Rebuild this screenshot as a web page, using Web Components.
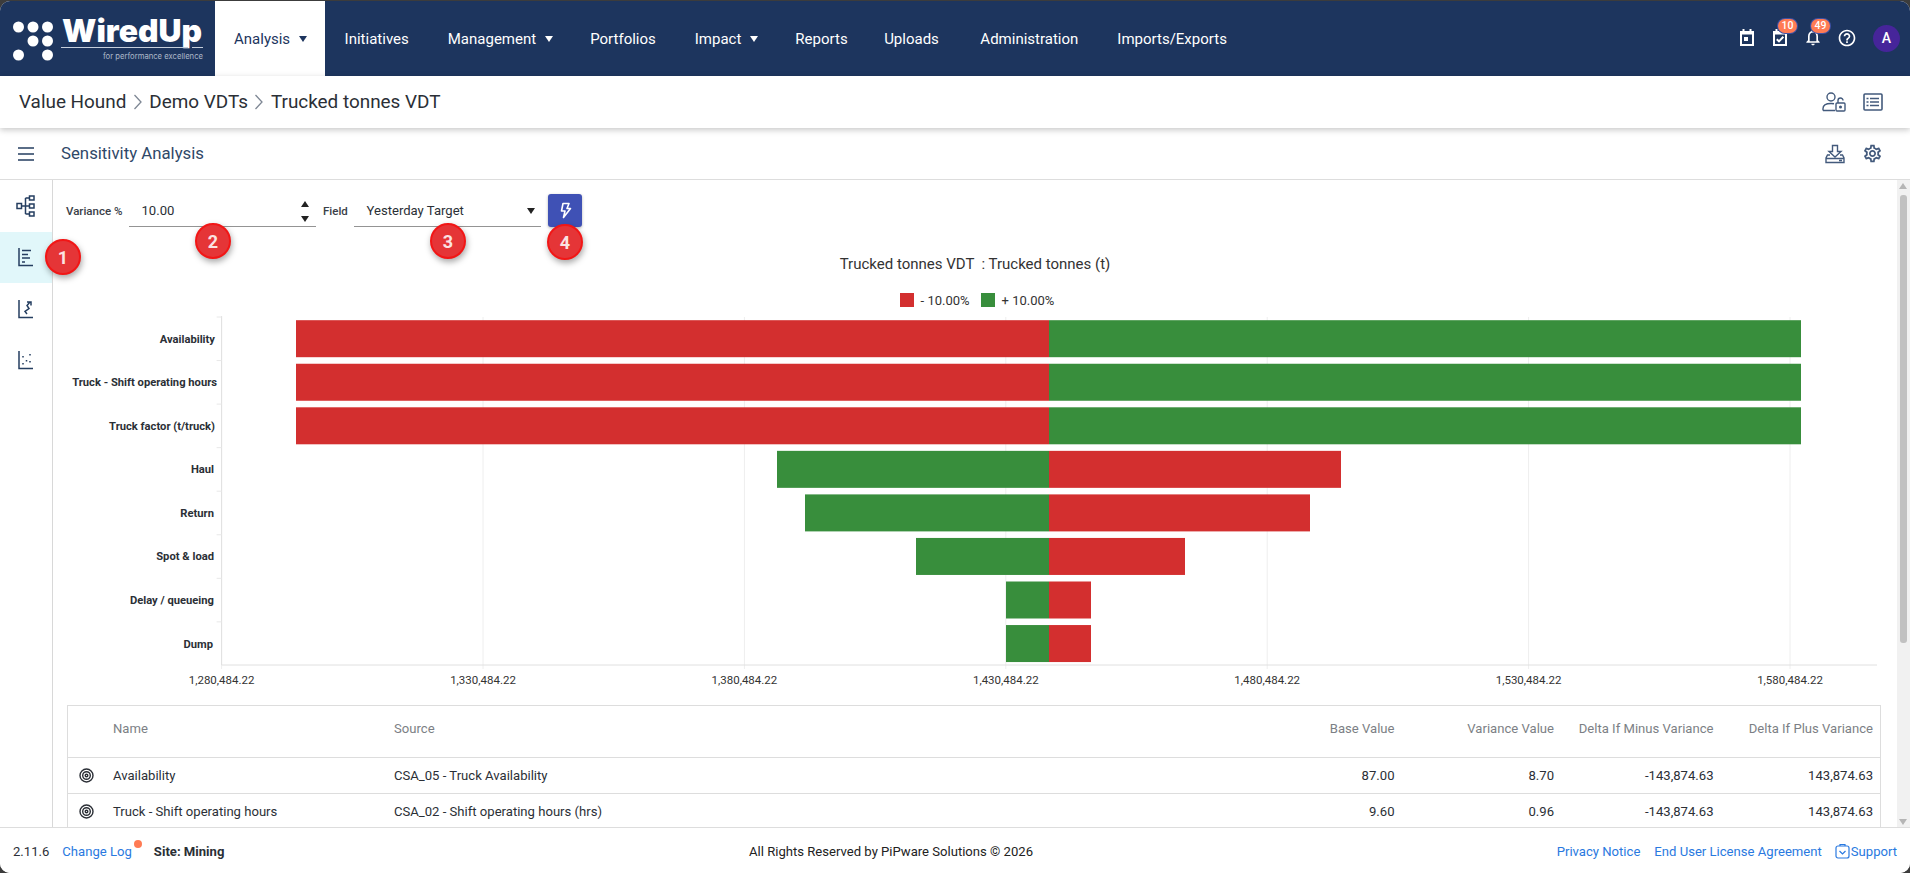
<!DOCTYPE html>
<html lang="en"><head><meta charset="utf-8"><title>Sensitivity Analysis</title>
<style>
html,body{margin:0;height:873px;overflow:hidden;background:#3c3c3c}
body{font-family:Roboto,"Liberation Sans",sans-serif}
app-shell{display:flex}
</style></head><body>
<app-shell>
  <wu-header></wu-header>
  <wu-crumb></wu-crumb>
  <wu-titlebar></wu-titlebar>
  <div slot="body">
    <wu-sidebar></wu-sidebar>
    <wu-main>
      <wu-toolbar></wu-toolbar>
      <wu-chart></wu-chart>
      <wu-table></wu-table>
    </wu-main>
  </div>
  <wu-footer></wu-footer>
</app-shell>
<script>
function def(name,css,html,init){
  customElements.define(name,class extends HTMLElement{
    constructor(){super();const s=this.attachShadow({mode:'open'});
      s.innerHTML='<style>'+css+'</style>'+(typeof html==='function'?html(this):html);
      if(init)init(s,this);}
  });
}
const GEAR="M19.43 12.98c.04-.32.07-.64.07-.98 0-.34-.03-.66-.07-.98l2.11-1.65c.19-.15.24-.42.12-.64l-2-3.46c-.09-.16-.26-.25-.44-.25-.06 0-.12.01-.17.03l-2.49 1c-.52-.4-1.08-.73-1.69-.98l-.38-2.65C14.46 2.18 14.25 2 14 2h-4c-.25 0-.46.18-.49.42l-.38 2.65c-.61.25-1.17.59-1.69.98l-2.49-1c-.06-.02-.12-.03-.18-.03-.17 0-.34.09-.43.25l-2 3.46c-.13.22-.07.49.12.64l2.11 1.65c-.04.32-.07.65-.07.98 0 .33.03.66.07.98l-2.11 1.65c-.19.15-.24.42-.12.64l2 3.46c.09.16.26.25.44.25.06 0 .12-.01.17-.03l2.49-1c.52.4 1.08.73 1.69.98l.38 2.65c.03.24.24.42.49.42h4c.25 0 .46-.18.49-.42l.38-2.65c.61-.25 1.17-.59 1.69-.98l2.49 1c.06.02.12.03.18.03.17 0 .34-.09.43-.25l2-3.46c.12-.22.07-.49-.12-.64l-2.11-1.65zm-1.98-1.71c.04.31.05.52.05.73 0 .21-.02.43-.05.73l-.14 1.13.89.7 1.08.84-.7 1.21-1.27-.51-1.04-.42-.9.68c-.43.32-.84.56-1.25.73l-1.06.43-.16 1.13-.2 1.35h-1.4l-.19-1.35-.16-1.13-1.06-.43c-.43-.18-.83-.41-1.23-.71l-.91-.7-1.06.43-1.27.51-.7-1.21 1.08-.84.89-.7-.14-1.13c-.03-.31-.05-.54-.05-.74s.02-.43.05-.73l.14-1.13-.89-.7-1.08-.84.7-1.21 1.27.51 1.04.42.9-.68c.43-.32.84-.56 1.25-.73l1.06-.43.16-1.13.2-1.35h1.39l.19 1.35.16 1.13 1.06.43c.43.18.83.41 1.23.71l.91.7 1.06-.43 1.27-.51.7 1.21-1.07.85-.89.7.14 1.13zM12 8c-2.21 0-4 1.79-4 4s1.79 4 4 4 4-1.79 4-4-1.79-4-4-4zm0 6c-1.1 0-2-.9-2-2s.9-2 2-2 2 .9 2 2-.9 2-2 2z";
const BELL="M12 22c1.1 0 2-.9 2-2h-4c0 1.1.9 2 2 2zm6-6v-5c0-3.07-1.63-5.64-4.5-6.32V4c0-.83-.67-1.5-1.5-1.5s-1.5.67-1.5 1.5v.68C7.64 5.36 6 7.92 6 11v5l-2 2v1h16v-1l-2-2zm-2 1H8v-6c0-2.48 1.51-4.5 4-4.5s4 2.02 4 4.5v6z";
const HELP="M11 18h2v-2h-2v2zm1-16C6.48 2 2 6.48 2 12s4.48 10 10 10 10-4.48 10-10S17.52 2 12 2zm0 18c-4.41 0-8-3.59-8-8s3.59-8 8-8 8 3.59 8 8-3.59 8-8 8zm0-14c-2.21 0-4 1.79-4 4h2c0-1.1.9-2 2-2s2 .9 2 2c0 2-3 1.75-3 5h2c0-2.25 3-2.5 3-5 0-2.21-1.79-4-4-4z";

def('app-shell',`:host{display:flex;flex-direction:column;height:872px;margin-top:1px;background:#fff;border-radius:10px;overflow:hidden;position:relative}
::slotted(div){display:flex;flex:1;min-height:0}`,`<slot></slot>`,(s,h)=>{h.querySelector('[slot=body]').removeAttribute('slot');});

def('wu-step',`:host{position:absolute;z-index:5;width:36px;height:36px;box-sizing:border-box;border-radius:50%;background:#e53537;border:2px solid #f21616;box-shadow:1px 3px 6px rgba(0,0,0,.35);color:#fbe3e3;font:700 18px Roboto,sans-serif;display:flex;align-items:center;justify-content:center}`,`<slot></slot>`);

def('wu-header',`:host{display:flex;flex:none;height:75px;background:#1d355e;color:#fff;font:400 15px Roboto,sans-serif}
.logo{flex:none;width:215px;height:75px;display:block}
nav{display:flex}
.i{display:flex;align-items:center;padding:0 19.5px;white-space:nowrap}
.i.k{padding-right:17.5px}
.i.u{margin-left:-2.5px;margin-right:2.5px}
.i.a{background:#fff;color:#1d355e;padding-left:19px;padding-right:18px}
.c{width:0;height:0;border:4px solid transparent;border-top:6px solid currentColor;border-bottom:0;margin-left:9px;}
.r{margin-left:auto;position:relative;width:210px;box-sizing:border-box}
.r svg{display:block;flex:none}
.b{position:absolute;top:18px;width:19px;height:14px;border-radius:7px;background:#ff7b54;box-shadow:0 0 0 1px #3f51a5;color:#fff;font:500 10.5px/14px Roboto,sans-serif;text-align:center}
.av{position:absolute;left:173px;top:24px;width:27px;height:27px;border-radius:50%;background:#46259a;font:500 14px/27px Roboto,sans-serif;text-align:center}
.ic{position:absolute;top:28px}
`,`<svg class="logo" viewBox="0 1 215 75">
<g fill="#fff"><circle cx="18.5" cy="27" r="5.5"/><circle cx="33" cy="27" r="5.5"/><circle cx="47.5" cy="27" r="5.5"/><circle cx="33" cy="41" r="5.5"/><circle cx="47.5" cy="41" r="5.5"/><circle cx="18.5" cy="55" r="5.5"/><circle cx="47.5" cy="55" r="5.5"/></g>
<text x="62" y="42" font-family="Inter,sans-serif" font-weight="900" font-size="31" fill="#fff" textLength="140" lengthAdjust="spacingAndGlyphs">WiredUp</text>
<path d="M61 47.5H188M192 47.5H203" stroke="#c6cfdc" stroke-width="1"/>
<text x="103" y="58.5" font-family="Inter,sans-serif" font-size="8" fill="#aeb9ca" textLength="100" lengthAdjust="spacingAndGlyphs">for performance excellence</text></svg>
<nav><div class="i a">Analysis<span class="c"></span></div><div class="i">Initiatives</div><div class="i k">Management<span class="c"></span></div><div class="i">Portfolios</div><div class="i k">Impact<span class="c"></span></div><div class="i">Reports</div><div class="i u">Uploads</div><div class="i">Administration</div><div class="i">Imports/Exports</div></nav>
<div class="r">
<svg class="ic" style="left:39px" width="16" height="17" viewBox="0 0 16 17" fill="none" stroke="#fff" stroke-width="2"><rect x="2" y="3" width="12" height="13"/><path d="M4.5 0V3M11.5 0V3M2 4.5H14"/><rect x="5" y="8" width="4" height="4" fill="#fff" stroke="none"/></svg>
<svg class="ic" style="left:72px" width="16" height="17" viewBox="0 0 16 17" fill="none" stroke="#fff" stroke-width="2"><rect x="2" y="3" width="12" height="13"/><path d="M4.5 0V3M11.5 0V3M2 4.5H14"/><path d="M4.8 10.2L7 12.4L11.4 7.8"/></svg>
<span class="b" style="left:78px">10</span>
<svg class="ic" style="left:103px;top:26px" width="20" height="20" viewBox="0 0 24 24" fill="#fff"><path d="${BELL}"/></svg>
<span class="b" style="left:111px">49</span>
<svg class="ic" style="left:137px;top:27px" width="20" height="20" viewBox="0 0 24 24" fill="#fff"><path d="${HELP}"/></svg>
<span class="av">A</span>
</div>`);

def('wu-crumb',`:host{display:flex;flex:none;align-items:center;height:52px;background:#fff;box-shadow:0 2px 6px rgba(0,0,0,.22);position:relative;z-index:2;padding:0 0 1px 19px;font:400 18.9px Roboto,sans-serif;color:#2b2f36;box-sizing:border-box}
svg.ch{margin:0 6.5px;flex:none}
.r{margin-left:auto;display:flex;gap:17px;padding-right:27px;align-items:center;padding-top:1px}`,`
Value Hound<svg class="ch" width="10" height="18" viewBox="0 0 10 18" fill="none" stroke="#7e8794" stroke-width="1.3"><path d="M1.5 2L8 9L1.5 16"/></svg>Demo VDTs<svg class="ch" width="10" height="18" viewBox="0 0 10 18" fill="none" stroke="#7e8794" stroke-width="1.3"><path d="M1.5 2L8 9L1.5 16"/></svg>Trucked tonnes VDT
<div class="r">
<svg width="24" height="20" viewBox="0 0 24 20" fill="none" stroke="#435a7c" stroke-width="1.4"><circle cx="9" cy="5" r="4"/><path d="M1 18.5v-2c0-3 3-5 8-5 1 0 2 .1 3 .3M1 18.5H13"/><rect x="14" y="11" width="9" height="8" rx="1"/><path d="M16 11V8.5a2.5 2.5 0 0 1 5 0"/><circle cx="18.5" cy="15" r=".8" fill="#435a7c"/></svg>
<svg width="20" height="18" viewBox="0 0 20 18" fill="none" stroke="#435a7c" stroke-width="1.6"><rect x="1" y="1" width="18" height="16" rx="1"/><path d="M7 5.5H16M7 9H16M7 12.5H16M3.5 5.5H5.5M3.5 9H5.5M3.5 12.5H5.5"/></svg>
</div>`);

def('wu-titlebar',`:host{display:flex;flex:none;align-items:center;height:51px;background:#fff;border-bottom:1px solid #ddd;box-sizing:content-box;color:#2f4868;font:400 16.8px Roboto,sans-serif;padding-left:18px}
.t{margin-left:26px;position:relative;top:-1px}
.r{margin-left:auto;display:flex;gap:17px;padding-right:27px;align-items:center}`,`
<svg width="17" height="14" viewBox="0 0 17 14" stroke="#253e60" stroke-width="1.6"><path d="M0 1H16M0 7H16M0 13H16"/></svg><span class="t">Sensitivity Analysis</span>
<div class="r">
<svg width="20" height="20" viewBox="0 0 20 20" fill="none" stroke="#435a7c" stroke-width="1.4"><path d="M7.5 1.5H12.5V7.5H16L10 13L4 7.5H7.5Z"/><path d="M5 11H2.5L1 14V18.5H19V14L17.5 11H15M1 14.5H19M14 16.5H17"/></svg>
<svg width="21" height="21" viewBox="0 0 24 24" fill="#435a7c"><path d="${GEAR}"/></svg>
</div>`);

def('wu-sidebar',`:host{display:flex;flex:none;flex-direction:column;width:52px;border-right:1px solid #d8d8d8;position:relative;background:#fff}
.n{height:51.5px;display:flex;align-items:center;justify-content:center}
.n.a{background:#e1f7fa}
svg{display:block;fill:none;stroke:#253e60;stroke-width:1.5}
wu-step{left:45px;top:59px}`,`
<div class="n"><svg width="20" height="22" viewBox="0 0 20 22"><rect x="1" y="8.5" width="4.5" height="5"/><path d="M5.5 11H9.5M9.5 3V19M9.5 3H13M9.5 11H13M9.5 19H13"/><rect x="13.5" y="1" width="4.5" height="4"/><rect x="13.5" y="9" width="4.5" height="4"/><rect x="13.5" y="17" width="4.5" height="4"/></svg></div>
<div class="n a"><svg width="18" height="20" viewBox="0 0 18 20"><path d="M2 1V18.5H16M5 3.5H14M5 7.5H11M5 11H13M5 15H8"/></svg></div>
<div class="n"><svg width="18" height="20" viewBox="0 0 18 20"><path d="M2 1V18.5H16M13 3L10 6.5L12 9.5L8 12.5L10 15M10 3H14V6.5"/></svg></div>
<div class="n"><svg width="18" height="20" viewBox="0 0 18 20"><path d="M2 1V18.5H16"/><g stroke-dasharray="1.5 100" stroke-linecap="butt"><path d="M6 13v2M6 6v2M9.5 10v2M13 4v2M13 11v2"/></g></svg></div>
<wu-step>1</wu-step>`);

def('wu-main',`:host{display:block;flex:1;min-width:0;position:relative;overflow:hidden;background:#fff}
.sb{position:absolute;right:0;top:0;bottom:0;width:13px;background:#f1f1f1}
.th{position:absolute;left:3px;width:7px;top:15px;height:448px;background:#c1c1c1;border-radius:3px}
.u,.d{position:absolute;left:2px;width:0;height:0;border:4.5px solid transparent}
.u{top:3px;border-bottom:6px solid #b5b5b5;border-top:0}
.d{bottom:2px;border-top:6px solid #b5b5b5;border-bottom:0}`,`<slot></slot><div class="sb"><div class="th"></div><div class="u"></div><div class="d"></div></div>`);

def('wu-toolbar',`:host{display:flex;align-items:flex-start;position:relative;height:70px;box-sizing:border-box;padding:14px 0 0 13px;font:400 13px Roboto,sans-serif;color:#2b2f36}
label{font:500 11.5px/34px Roboto,sans-serif;color:#3a4048;width:63px;flex:none}
.f{flex:none;width:187px;border-bottom:1px solid #949494;display:flex;align-items:center;padding:0 0 0 12.5px;box-sizing:border-box;height:33px;font-size:13.1px;position:relative}
.sp{position:absolute;right:7px;top:7px;display:flex;flex-direction:column;gap:9px}
.up,.dn{width:0;height:0;border:4px solid transparent}
.up{border-bottom:6px solid #222;border-top:0}.dn{border-top:6px solid #222;border-bottom:0}
.car{position:absolute;right:6px;top:14px;width:0;height:0;border:4px solid transparent;border-top:6px solid #222;border-bottom:0}
button{flex:none;margin-left:7px;width:34px;height:33px;border:0;border-radius:3px;background:#3f51b5;box-shadow:0 1px 3px rgba(0,0,0,.3);padding:0;display:flex;align-items:center;justify-content:center}
wu-step{top:43px}`,`
<label>Variance %</label>
<div class="f">10.00<span class="sp"><span class="up"></span><span class="dn"></span></span></div>
<label style="width:31px;margin-left:7px">Field</label>
<div class="f">Yesterday Target<span class="car"></span></div>
<button aria-label="Run"><svg width="13" height="17" viewBox="0 0 13 17" fill="none" stroke="#fff" stroke-width="1.6" stroke-linejoin="round"><path d="M4 1.5H10L8 6.5H11.5L4.5 15.5L6 9H2.5Z"/></svg></button>
<wu-step style="left:142px">2</wu-step><wu-step style="left:377px">3</wu-step><wu-step style="left:494px;top:44px">4</wu-step>`);

def('wu-chart',`:host{display:block;height:455px}
.t{height:26px;padding-top:1px;text-align:center;font:400 15px/26px Roboto,sans-serif;color:#333;width:1844px;white-space:pre;box-sizing:content-box}
.l{display:flex;justify-content:center;align-items:center;gap:7px;margin-top:8px;height:31px;padding-left:8px;padding-bottom:1px;box-sizing:border-box;font:400 13px Roboto,sans-serif;color:#333;width:1844px}
.l i{display:block;width:14px;height:14px}
.l span{margin-right:4px}
svg{display:block}
text{font-family:Roboto,sans-serif}`,()=>{
  const L=221.6,P=261.4,C=1049,T=317,R=43.55,H=37;
  const rows=[['Availability',296,'#d32f2f',1801,'#388e3c',215],['Truck - Shift operating hours',296,'#d32f2f',1801,'#388e3c',217],['Truck factor (t/truck)',296,'#d32f2f',1801,'#388e3c',215],['Haul',777,'#388e3c',1341,'#d32f2f',214],['Return',805,'#388e3c',1310,'#d32f2f',214],['Spot &amp; load',916,'#388e3c',1185,'#d32f2f',214],['Delay / queueing',1006,'#388e3c',1091,'#d32f2f',214],['Dump',1006,'#388e3c',1091,'#d32f2f',213]];
  let g='';
  for(let i=0;i<=6;i++){const x=L+P*i;
    g+=`<path d="M${x} ${T}V669" stroke="#eee"/><text x="${x}" y="684" text-anchor="middle" font-size="11.5" fill="#333">${(1280484+50000*i).toLocaleString('en-US')}.22</text>`;}
  g+=`<path d="M${L} ${T-1}V665M${L} 665H1877" stroke="#e0e0e0" fill="none"/>`;
  rows.forEach((r,i)=>{const y=T+R*i+3.2;
    g+=`<path d="M${L-5} ${T+R*i}H${L}" stroke="#e8e8e8"/>`;
    g+=`<text x="${r[5]}" y="${y+H/2+4}" text-anchor="end" font-size="11.2" font-weight="700" fill="#2b2f36">${r[0]}</text>`;
    g+=`<rect x="${r[1]}" y="${y}" width="${C-r[1]}" height="${H}" fill="${r[2]}"/><rect x="${C}" y="${y}" width="${r[3]-C}" height="${H}" fill="${r[4]}"/>`;});
  return `<div class="t">Trucked tonnes VDT  : Trucked tonnes (t)</div>
  <div class="l"><i style="background:#d32f2f"></i><span>- 10.00%</span><i style="background:#388e3c"></i><span>+ 10.00%</span></div>
  <svg width="1844" height="388" viewBox="53 316 1844 388">${g}</svg>`;
});

def('wu-row',`:host{display:grid;grid-template-columns:45px 281px 1fr 159.5px 159.5px 159.5px 159.5px;align-items:center;border-bottom:1px solid #ddd;color:#2b2f36;font:400 13.1px Roboto,sans-serif;height:36px;box-sizing:border-box}
:host([head]){height:52px;align-items:start;padding-top:15px;color:#7c7f85}
.r{text-align:right;padding-right:7px}
.ic{display:flex;justify-content:flex-end;padding-right:19px}`,t=>{
  const c=(t.getAttribute('c')||'').split('|');
  const ic=t.hasAttribute('head')?'':'<svg width="15" height="15" viewBox="0 0 15 15" fill="none" stroke="#2b2f36" stroke-width="1.4"><circle cx="7.5" cy="7.5" r="6.5"/><circle cx="7.5" cy="7.5" r="3.8"/><circle cx="7.5" cy="7.5" r="1.3"/></svg>';
  return `<div class="ic">${ic}</div><div>${c[0]}</div><div>${c[1]}</div><div class="r">${c[2]}</div><div class="r">${c[3]}</div><div class="r">${c[4]}</div><div class="r">${c[5]}</div>`;
});

def('wu-table',`:host{display:block;margin-left:14px;width:1814px;box-sizing:border-box;border:1px solid #ddd}`,`
<wu-row head c="Name|Source|Base Value|Variance Value|Delta If Minus Variance|Delta If Plus Variance"></wu-row>
<wu-row c="Availability|CSA_05 - Truck Availability|87.00|8.70|-143,874.63|143,874.63"></wu-row>
<wu-row c="Truck - Shift operating hours|CSA_02 - Shift operating hours (hrs)|9.60|0.96|-143,874.63|143,874.63"></wu-row>`);

def('wu-footer',`:host{display:flex;flex:none;align-items:center;height:46px;border-top:1px solid #ddd;background:#fff;position:relative;z-index:3;padding:1px 13px 0;font:400 13.1px Roboto,sans-serif;color:#2b2f36;box-sizing:border-box}
a{color:#2979e0;text-decoration:none}
.c{position:absolute;left:749px;top:16px;color:#222}
.d{display:inline-block;width:8px;height:8px;border-radius:50%;background:#ff7b54;position:relative;top:-7px;margin:0 12px 0 2px}
b{font-weight:700}
.r{margin-left:auto;display:flex;align-items:center;padding-right:0}
svg{margin-left:13px;margin-right:1px}`,`
<span>2.11.6</span><a style="margin-left:13px">Change Log</a><span class="d"></span><b>Site: Mining</b>
<span class="c">All Rights Reserved by PiPware Solutions © 2026</span>
<div class="r"><a>Privacy Notice</a><a style="margin-left:14px">End User License Agreement</a>
<svg width="15" height="16" viewBox="0 0 15 16" fill="none" stroke="#2979e0" stroke-width="1.2"><rect x="1" y="3" width="13" height="12" rx="2"/><path d="M5 3V1.5H10V3M4.5 8L7.5 11L10.5 8"/></svg><a>Support</a></div>`);
</script>
</body></html>
